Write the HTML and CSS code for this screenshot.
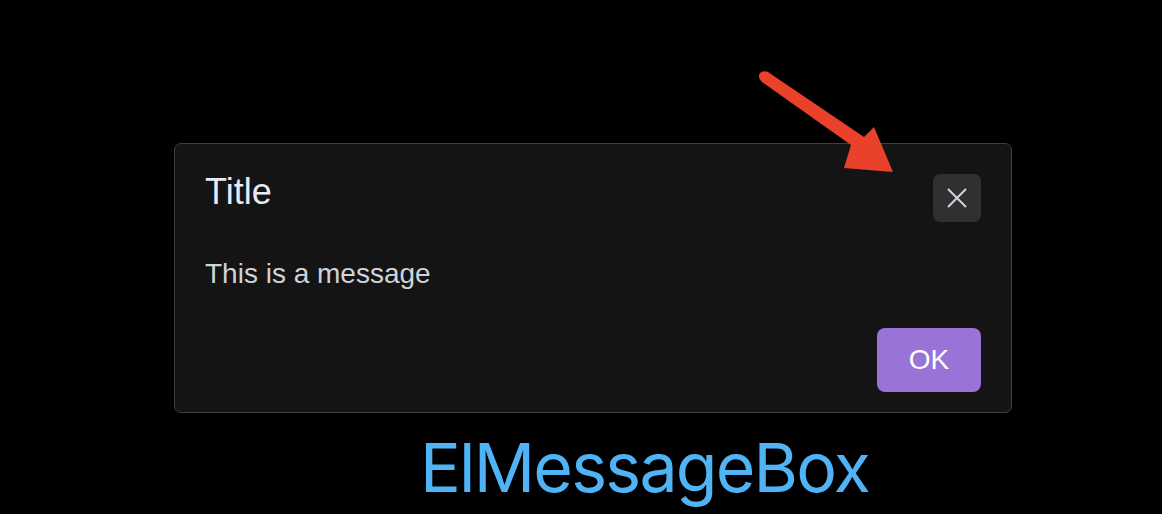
FILE: index.html
```html
<!DOCTYPE html>
<html>
<head>
<meta charset="utf-8">
<link rel="stylesheet" href="styles.css">
</head>
<body>
<main class="stage">
  <section class="msgbox">
    <header class="msgbox-header">
      <span class="msgbox-title">Title</span>
      <button class="msgbox-close" aria-label="Close">
        <svg width="20" height="20" viewBox="0 0 20 20"><path d="M1 1L19 19M19 1L1 19" stroke="#cfd3dc" stroke-width="2" stroke-linecap="butt" fill="none"/></svg>
      </button>
    </header>
    <p class="msgbox-message">This is a message</p>
    <footer class="msgbox-footer">
      <button class="btn-ok">OK</button>
    </footer>
  </section>
  <h1 class="caption">ElMessageBox</h1>
  <svg class="arrow" width="1162" height="514" viewBox="0 0 1162 514">
    <path d="M760 73 Q757 78 762 82 L851 145 L844 168 L893 172 L874 127 L864 137 L768 72 Q764 70 760 73 Z" fill="#e9412a"/>
  </svg>
</main>
</body>
</html>
```

FILE: styles.css
```css
html, body {
  margin: 0;
  padding: 0;
  background: #000;
  width: 1162px;
  height: 514px;
  overflow: hidden;
}

.stage {
  position: relative;
  width: 1162px;
  height: 514px;
  display: flex;
  flex-direction: column;
  padding-top: 143px;
  padding-left: 174px;
  box-sizing: border-box;
  font-family: "Liberation Sans", Arial, sans-serif;
}

.msgbox {
  position: relative;
  width: 838px;
  border: 1px solid #3f3f40;
  border-radius: 7px;
  background: #141414;
  padding: 30px 30px 20px 30px;
  box-sizing: border-box;
  display: flex;
  flex-direction: column;
}

.msgbox-header {
  height: 36px;
  display: flex;
  align-items: center;
}

.msgbox-title {
  font-size: 36px;
  line-height: 36px;
  color: #e5eaf3;
}

.msgbox-close {
  position: absolute;
  top: 30px;
  right: 30px;
  width: 48px;
  height: 48px;
  border: none;
  border-radius: 7px;
  background: #303030;
  padding: 0;
  display: flex;
  align-items: center;
  justify-content: center;
}

.msgbox-message {
  margin: 43px 0 0 0;
  font-size: 28px;
  line-height: 42px;
  color: #cfd3dc;
}

.msgbox-footer {
  margin-top: 33px;
  display: flex;
  justify-content: flex-end;
}

.btn-ok {
  width: 104px;
  height: 64px;
  border: none;
  border-radius: 8px;
  background: #9a73d6;
  color: #fff;
  font-family: "Liberation Sans", Arial, sans-serif;
  font-size: 28px;
  font-weight: 500;
  padding: 0;
}

.caption {
  margin: 20px 0 0 246px;
  font-family: Inter, "Liberation Sans", sans-serif;
  font-weight: 400;
  font-size: 68px;
  line-height: 68px;
  letter-spacing: -1.8px;
  color: #4fb3f6;
}

.arrow {
  position: absolute;
  left: 0;
  top: 0;
  pointer-events: none;
}
```
